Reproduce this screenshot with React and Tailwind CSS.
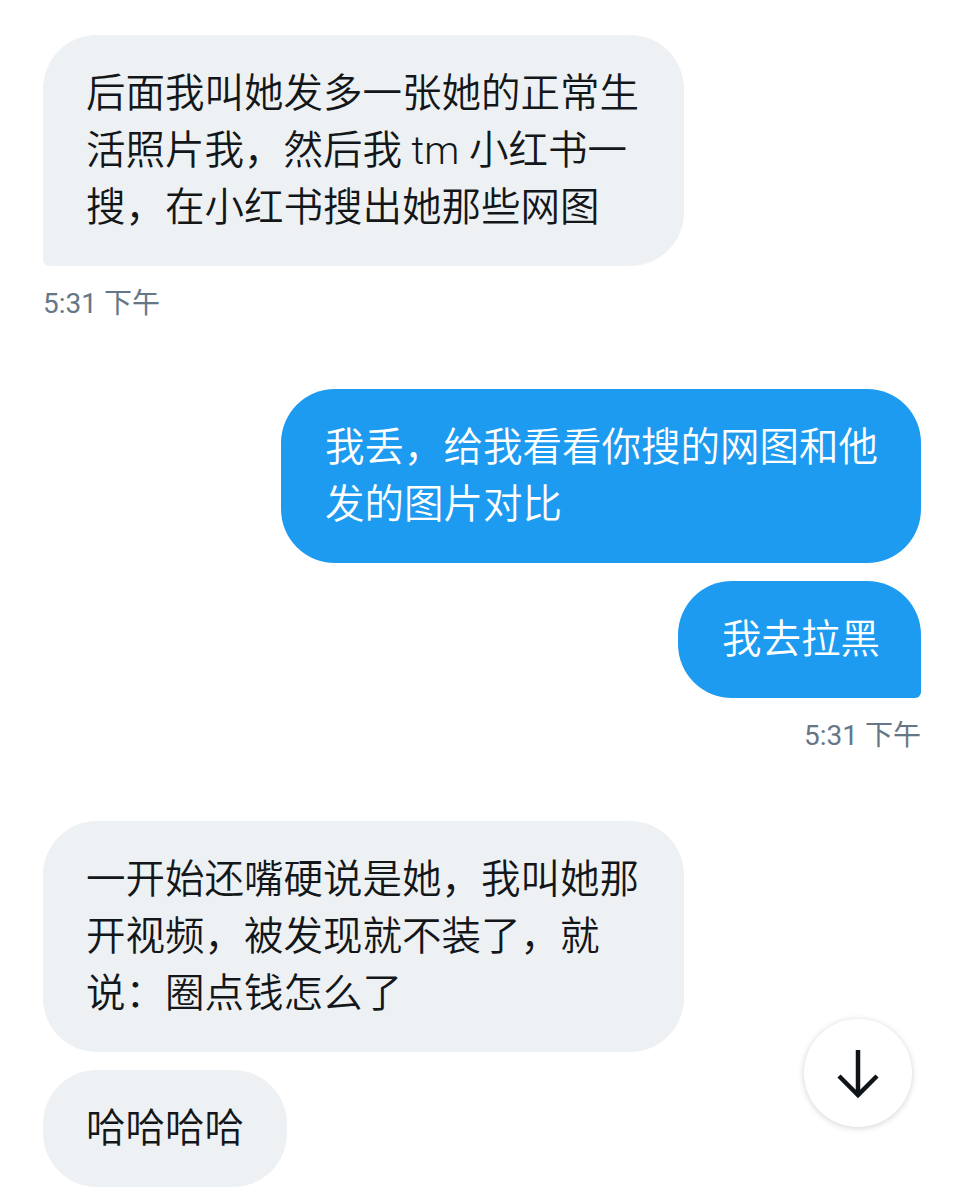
export default function App() {
  const font = { fontFamily: 'Roboto, "Noto Sans CJK SC", sans-serif' };
  return (
    <div className="relative h-[1200px] w-[965px] overflow-hidden bg-white" style={font}>
      <div className="flex flex-col pl-[43px] pr-[44px] pt-[35px]">
        {/* bubble 1 */}
        <div className="self-start w-[641px] rounded-[54px] rounded-bl-[6px] bg-[#eef1f3] py-[30px] pl-[43px] pr-[38px] text-[39.5px] font-[350] leading-[57px] text-[#14171a]">
          <div className="whitespace-nowrap">后面我叫她发多一张她的正常生</div>
          <div className="whitespace-nowrap">活照片我，然后我 tm 小红书一</div>
          <div className="whitespace-nowrap">搜，在小红书搜出她那些网图</div>
        </div>
        <div className="mt-[20px] text-[28px] leading-[36px] text-[#657786]">5:31 下午</div>

        {/* bubble 2 */}
        <div className="mt-[67px] self-end w-[640px] rounded-[54px] bg-[#1d9bf0] py-[30px] pl-[44px] pr-[38px] text-[39.5px] font-[350] leading-[57px] text-white">
          <div className="whitespace-nowrap">我丢，给我看看你搜的网图和他</div>
          <div className="whitespace-nowrap">发的图片对比</div>
        </div>
        {/* bubble 3 */}
        <div className="mt-[18px] self-end rounded-[54px] rounded-br-[6px] bg-[#1d9bf0] py-[30px] pl-[44px] pr-[41px] text-[39.5px] font-[350] leading-[57px] text-white">
          <div className="whitespace-nowrap">我去拉黑</div>
        </div>
        <div className="mt-[20px] self-end text-[28px] leading-[36px] text-[#657786]">5:31 下午</div>

        {/* bubble 4 */}
        <div className="mt-[67px] self-start w-[641px] rounded-[54px] bg-[#eef1f3] py-[30px] pl-[43px] pr-[38px] text-[39.5px] font-[350] leading-[57px] text-[#14171a]">
          <div className="whitespace-nowrap">一开始还嘴硬说是她，我叫她那</div>
          <div className="whitespace-nowrap">开视频，被发现就不装了，就</div>
          <div className="whitespace-nowrap">说：圈点钱怎么了</div>
        </div>
        {/* bubble 5 */}
        <div className="mt-[18px] self-start rounded-[54px] bg-[#eef1f3] py-[30px] pl-[43px] pr-[43px] text-[39.5px] font-[350] leading-[57px] text-[#14171a]">
          <div className="whitespace-nowrap">哈哈哈哈</div>
        </div>
      </div>

      {/* scroll-down button */}
      <div className="absolute left-[804px] top-[1019px] flex h-[108px] w-[108px] items-center justify-center rounded-full bg-white shadow-[0_1px_6px_rgba(0,0,0,0.18)]">
        <svg width="44" height="52" viewBox="0 0 44 52" fill="none" stroke="#0f1419" strokeWidth="4.5" strokeLinecap="butt" strokeLinejoin="miter">
          <path d="M22 3 V47" />
          <path d="M3 29 L22 48 L41 29" />
        </svg>
      </div>
    </div>
  );
}
